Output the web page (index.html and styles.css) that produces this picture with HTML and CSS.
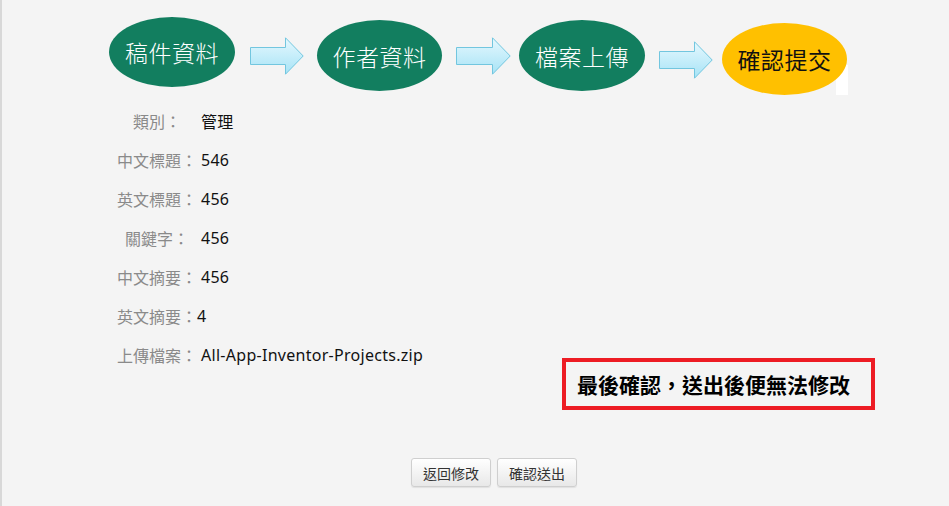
FILE: index.html
```html
<!DOCTYPE html>
<html lang="zh-Hant">
<head>
<meta charset="utf-8">
<title>確認提交</title>
<link rel="stylesheet" href="styles.css">
</head>
<body>
<div class="page">
  <div class="steps">
    <div class="step step-1 done">稿件資料</div>
    <svg class="arrow arrow-1" width="54" height="38" viewBox="0 0 54 38"><defs><linearGradient id="ag1" x1="0" y1="0" x2="0" y2="1"><stop offset="0" stop-color="#e6f8fe"/><stop offset="1" stop-color="#a6e3f6"/></linearGradient></defs><path d="M0.5 10.5H35.5V0.8L53.2 19L35.5 37.2V27.5H0.5Z" fill="url(#ag1)" stroke="#72c6df" stroke-width="1"/></svg>
    <div class="step step-2 done">作者資料</div>
    <svg class="arrow arrow-2" width="55" height="38" viewBox="0 0 55 38"><defs><linearGradient id="ag2" x1="0" y1="0" x2="0" y2="1"><stop offset="0" stop-color="#e6f8fe"/><stop offset="1" stop-color="#a6e3f6"/></linearGradient></defs><path d="M0.5 10.5H36.5V0.8L54.2 19L36.5 37.2V27.5H0.5Z" fill="url(#ag2)" stroke="#72c6df" stroke-width="1"/></svg>
    <div class="step step-3 done">檔案上傳</div>
    <svg class="arrow arrow-3" width="54" height="38" viewBox="0 0 54 38"><defs><linearGradient id="ag3" x1="0" y1="0" x2="0" y2="1"><stop offset="0" stop-color="#e6f8fe"/><stop offset="1" stop-color="#a6e3f6"/></linearGradient></defs><path d="M0.5 10.5H35.5V0.8L53.2 19L35.5 37.2V27.5H0.5Z" fill="url(#ag3)" stroke="#72c6df" stroke-width="1"/></svg>
    <div class="step-wrap">
      <div class="step step-4 current">確認提交</div>
    </div>
  </div>

  <div class="content">
    <div class="form">
      <div class="row"><span class="lbl">類別：</span><span class="val">管理</span></div>
      <div class="row"><span class="lbl">中文標題：</span><span class="val">546</span></div>
      <div class="row"><span class="lbl">英文標題：</span><span class="val">456</span></div>
      <div class="row"><span class="lbl">關鍵字：</span><span class="val">456</span></div>
      <div class="row"><span class="lbl">中文摘要：</span><span class="val">456</span></div>
      <div class="row"><span class="lbl">英文摘要：</span><span class="val tight">4</span></div>
      <div class="row"><span class="lbl">上傳檔案：</span><span class="val">All-App-Inventor-Projects.zip</span></div>
    </div>
    <div class="note">最後確認，送出後便無法修改</div>
  </div>

  <div class="actions">
    <button class="btn" type="button">返回修改</button>
    <button class="btn" type="button">確認送出</button>
  </div>
</div>
</body>
</html>
```

FILE: styles.css
```css
html, body {
  margin: 0;
  padding: 0;
  background: #f4f4f4;
}
body {
  font-family: "Noto Sans", "Noto Sans CJK TC", sans-serif;
}
.page {
  border-left: 2px solid #d8d8d8;
  min-height: 506px;
  box-sizing: border-box;
}
.steps {
  display: flex;
  align-items: flex-start;
  padding-left: 107px;
  padding-top: 17px;
}
.step {
  display: flex;
  align-items: center;
  justify-content: center;
  border-radius: 50%;
  font-family: "Noto Sans CJK TC", sans-serif;
  font-size: 23px;
  font-weight: 300;
  letter-spacing: 0.5px;
  flex: none;
}
.done {
  background: #127e5f;
  color: #ffffff;
}
.current {
  background: #ffc000;
  color: #111111;
  font-weight: 400;
}
.step-1 { width: 126px; height: 70px; }
.arrow { flex: none; display: block; }
.arrow-1 { margin-left: 15px; margin-top: 20px; }
.step-2 { width: 125px; height: 71px; margin-left: 13px; margin-top: 3px; }
.arrow-2 { margin-left: 14px; margin-top: 20px; }
.step-3 { width: 126px; height: 71px; margin-left: 8px; margin-top: 3px; }
.arrow-3 { margin-left: 14px; margin-top: 24px; }
.step-wrap {
  margin-left: 9px;
  margin-top: 6px;
  width: 126px;
  height: 72px;
  background: linear-gradient(to right, transparent 0, transparent 114px, #ffffff 114px) bottom right / 100% 30px no-repeat;
}
.step-4 { width: 125px; height: 72px; }

.content {
  display: flex;
  align-items: flex-start;
  margin-top: 6px;
  padding-left: 115px;
}
.form {
  width: 445px;
  flex: none;
}
.row {
  height: 39px;
  display: flex;
  align-items: center;
  font-size: 16px;
}
.lbl {
  width: 80px;
  text-align: center;
  color: #8a8a8a;
  font-family: "Noto Sans CJK TC", sans-serif;
  flex: none;
}
.val {
  color: #111111;
  margin-left: 4px;
  letter-spacing: 0.28px;
  white-space: pre;
}
.val.tight { margin-left: 0; }
.note {
  margin-top: 257px;
  width: 313px;
  height: 52px;
  box-sizing: border-box;
  border: 4px solid #ed1c24;
  padding-left: 11px;
  display: flex;
  align-items: center;
  font-family: "Noto Sans CJK TC", sans-serif;
  font-weight: 700;
  font-size: 21px;
  color: #000000;
}
.actions {
  display: flex;
  gap: 6px;
  margin-top: 48px;
  padding-left: 409px;
}
.btn {
  width: 80px;
  height: 29px;
  border: 1px solid #cfcfcf;
  border-radius: 3px;
  background: linear-gradient(#ffffff, #e8e8e8);
  box-shadow: 0 1px 1px rgba(0,0,0,0.08);
  font-family: "Noto Sans CJK TC", sans-serif;
  font-size: 14px;
  color: #333333;
  padding: 0;
  cursor: pointer;
}
```
